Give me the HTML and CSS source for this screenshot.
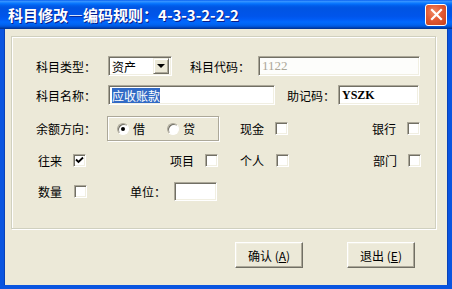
FILE: index.html
```html
<!DOCTYPE html>
<html lang="zh-CN">
<head>
  <meta charset="UTF-8" />
  <title>科目修改</title>
  <link rel="stylesheet" href="styles.css">
</head>
<body>
  <div class="window">
    <div class="titlebar">
      <span class="title">科目修改—编码规则<span class="colon">：</span>4-3-3-2-2-2</span>
      <span class="close-btn">
        <svg width="13" height="13" viewBox="0 0 13 13">
          <path d="M2 2 L11 11 M11 2 L2 11" stroke="#fff" stroke-width="2.2" stroke-linecap="square" />
        </svg>
      </span>
    </div>

    <div class="client">
      <div class="group">
        <div class="row">
          <span class="lbl w72">科目类型<span class="colon">：</span></span>
          <div class="field combo">
            <span class="combo-text">资产</span>
            <span class="combo-btn"><span class="arrow"></span></span>
          </div>
          <span class="lbl w68 ml18">科目代码<span class="colon">：</span></span>
          <div class="field disabled w162">1122</div>
        </div>

        <div class="row row-2">
          <span class="lbl w72">科目名称<span class="colon">：</span></span>
          <div class="field w167"><span class="sel">应收账款</span></div>
          <span class="lbl w51 ml12">助记码<span class="colon">：</span></span>
          <div class="field mono w81">YSZK</div>
        </div>

        <div class="row row-3">
          <span class="lbl w71">余额方向<span class="colon">：</span></span>
          <div class="radio-group">
            <span class="radio checked"></span>
            <span class="radio-lbl">借</span>
            <span class="radio ml22"></span>
            <span class="radio-lbl">贷</span>
          </div>
          <span class="lbl w35 ml21">现金</span>
          <span class="check"></span>
          <span class="lbl w35 ml84">银行</span>
          <span class="check"></span>
        </div>

        <div class="row row-4">
          <span class="lbl w35 ml2">往来</span>
          <span class="check">
            <svg width="9" height="9" viewBox="0 0 9 9">
              <path d="M1 3.5 L3.5 6 L8 1.5" fill="none" stroke="#000" stroke-width="1.8" />
            </svg>
          </span>
          <span class="lbl w35 ml84">项目</span>
          <span class="check"></span>
          <span class="lbl w36 ml22">个人</span>
          <span class="check"></span>
          <span class="lbl w35 ml84">部门</span>
          <span class="check"></span>
        </div>

        <div class="row row-5">
          <span class="lbl w36 ml2">数量</span>
          <span class="check"></span>
          <span class="lbl w44 ml43">单位<span class="colon">：</span></span>
          <div class="field w43"></div>
        </div>
      </div>

      <div class="actions">
        <button class="btn">确认 (<u>A</u>)</button>
        <button class="btn">退出 (<u>E</u>)</button>
      </div>
    </div>
  </div>
</body>
</html>
```

FILE: styles.css
```css
* {
  box-sizing: border-box;
}

body {
  margin: 0;
  font-family: "Noto Sans CJK SC", sans-serif;
  font-size: 12px;
  color: #000;
  background: #ece9d8;
}

.window {
  width: 452px;
  height: 289px;
  display: flex;
  flex-direction: column;
}

/* full-width colon drawn centred, like the system font */
.colon {
  font-family: "Noto Sans CJK TC", "Noto Sans CJK SC", sans-serif;
}

/* title bar */
.titlebar {
  height: 29px;
  flex: none;
  display: flex;
  align-items: center;
  justify-content: space-between;
  padding: 0 5px 0 8px;
  background: linear-gradient(to bottom,
    #0058ee 0%, #3a93ff 4%, #288eff 7%, #127dff 10%, #036ffc 14%,
    #0262ee 18%, #0057e5 24%, #0054e3 30%, #0055eb 56%, #005bf5 66%,
    #026afe 76%, #0062ef 86%, #0052d6 92%, #0040ab 96%, #003092 100%);
}

.title {
  color: #fff;
  font-size: 15px;
  font-weight: bold;
  text-shadow: 1px 1px 0 #0a1e8a;
}

.close-btn {
  width: 22px;
  height: 22px;
  display: flex;
  align-items: center;
  justify-content: center;
  border: 1px solid #fff;
  border-radius: 3px;
  background: radial-gradient(circle at 40% 35%, #f08a66 0%, #e35a34 45%, #c7401c 100%);
}

/* client area */
.client {
  flex: 1;
  display: flex;
  flex-direction: column;
  border: 4px solid #0a55e0;
  border-top: 0;
  box-shadow: inset 1px 0 0 #0842b8, inset -1px 0 0 #0842b8;
}

.group {
  margin: 7px 12px 0 7px;
  height: 193px;
  border: 1px solid #d0d0bf;
  box-shadow: inset 1px 1px 0 #fff, 1px 1px 0 #fff;
  padding: 19px 0 0 24px;
}

.row {
  display: flex;
  align-items: center;
  height: 20px;
}

.row-2 { margin-top: 9px; }
.row-3 { margin-top: 11px; height: 25px; }
.row-4 { margin-top: 9px; }
.row-5 { margin-top: 11px; }

.lbl {
  flex: none;
  white-space: nowrap;
}

.w35 { width: 35px; }
.w36 { width: 36px; }
.w44 { width: 44px; }
.w51 { width: 51px; }
.w68 { width: 68px; }
.w71 { width: 71px; }
.w72 { width: 72px; }
.w43 { width: 43px; }
.w81 { width: 81px; }
.w162 { width: 162px; }
.w167 { width: 167px; }

.ml2 { margin-left: 2px; }
.ml12 { margin-left: 12px; }
.ml18 { margin-left: 18px; }
.ml21 { margin-left: 21px; }
.ml22 { margin-left: 22px; }
.ml43 { margin-left: 43px; }
.ml84 { margin-left: 84px; }

/* sunken text fields */
.field {
  flex: none;
  height: 20px;
  display: flex;
  align-items: center;
  padding: 0 2px 0 3px;
  background: #fff;
  border: 1px solid;
  border-color: #aca899 #fff #fff #aca899;
  box-shadow: inset 1px 1px 0 #716f64, inset -1px -1px 0 #f1efe2;
  font-family: "Liberation Serif", "Noto Sans CJK SC", serif;
  font-size: 13px;
}

.field.disabled {
  color: #aca899;
  background: #fdfdfb;
}

.field.mono {
  font-family: "Liberation Serif", serif;
  font-weight: bold;
  font-size: 12px;
}

.row-5 .field {
  height: 19px;
}

.sel {
  background: #316ac5;
  color: #fff;
  font-family: "Noto Sans CJK SC", sans-serif;
  font-size: 12px;
  line-height: 15px;
}

/* combo box */
.combo {
  width: 64px;
  padding: 2px 2px 2px 3px;
  justify-content: space-between;
}

.combo-text {
  font-family: "Noto Sans CJK SC", sans-serif;
  font-size: 12px;
}

.combo-btn {
  width: 16px;
  height: 16px;
  display: flex;
  align-items: center;
  justify-content: center;
  background: #ece9d8;
  border: 1px solid;
  border-color: #f1efe2 #716f64 #716f64 #f1efe2;
  box-shadow: inset 1px 1px 0 #fff, inset -1px -1px 0 #aca899;
}

.arrow {
  width: 0;
  height: 0;
  border-left: 4px solid transparent;
  border-right: 4px solid transparent;
  border-top: 4px solid #000;
}

/* radio group */
.radio-group {
  flex: none;
  width: 112px;
  height: 25px;
  display: flex;
  align-items: center;
  padding-left: 9px;
  border: 1px solid #aca899;
  box-shadow: inset 1px 1px 0 #fff, 1px 1px 0 #fff;
}

.radio {
  width: 12px;
  height: 12px;
  border-radius: 50%;
  border: 1px solid;
  border-color: #aca899 #fff #fff #aca899;
  background: #fff;
  box-shadow: inset 1px 1px 0 #716f64;
  display: flex;
  align-items: center;
  justify-content: center;
}

.radio.checked::after {
  content: "";
  width: 4px;
  height: 4px;
  border-radius: 50%;
  background: #000;
}

.radio-lbl {
  margin-left: 4px;
  font-size: 12px;
}

/* checkboxes */
.check {
  flex: none;
  width: 13px;
  height: 13px;
  display: flex;
  align-items: center;
  justify-content: center;
  background: #fff;
  border: 1px solid;
  border-color: #aca899 #fff #fff #aca899;
  box-shadow: inset 1px 1px 0 #716f64, inset -1px -1px 0 #f1efe2;
}

/* buttons */
.actions {
  display: flex;
  justify-content: flex-end;
  gap: 44px;
  padding: 13px 33px 0 0;
}

.btn {
  width: 68px;
  height: 26px;
  padding: 0;
  font-family: "Noto Sans CJK SC", sans-serif;
  font-size: 12px;
  color: #000;
  background: #ece9d8;
  border: 1px solid;
  border-color: #fff #716f64 #716f64 #fff;
  box-shadow: inset -1px -1px 0 #aca899, inset 1px 1px 0 #f1efe2;
}
```
